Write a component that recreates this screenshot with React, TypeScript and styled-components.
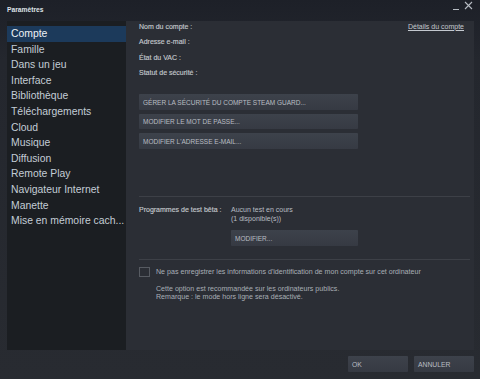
import React, { useState } from 'react';
import styled, { createGlobalStyle } from 'styled-components';

const GlobalStyle = createGlobalStyle`
  html, body {
    margin: 0;
    padding: 0;
    width: 480px;
    height: 379px;
    overflow: hidden;
    background: #272a30;
  }
  * { box-sizing: border-box; }
`;

const Window = styled.div`
  width: 480px;
  height: 379px;
  display: flex;
  flex-direction: column;
  font-family: 'Liberation Sans', Arial, sans-serif;
  background: linear-gradient(180deg, #1d2028 0px, #24272e 60px, #282b31 100%);
`;

const TitleBar = styled.div`
  height: 21px;
  flex: none;
  display: flex;
  align-items: center;
  padding: 0 6px 2px 7px;
`;

const Title = styled.div`
  flex: 1;
  font-size: 6.7px;
  font-weight: bold;
  color: #dfe3e8;
  margin-top: -1px;
`;

const WinButton = styled.button`
  background: none;
  border: none;
  padding: 0;
  width: 12px;
  height: 12px;
  display: flex;
  align-items: center;
  justify-content: center;
  color: #b7bcc3;
  margin-top: -8px;
  cursor: pointer;
`;

const Body = styled.div`
  flex: none;
  height: 329px;
  display: flex;
  padding: 0 6px 0 7px;
`;

const Nav = styled.nav`
  width: 119px;
  flex: none;
  background: #1b1e22;
  padding-top: 5px;
  display: flex;
  flex-direction: column;
`;

const NavItem = styled.div<{ $active?: boolean }>`
  height: 15.6px;
  line-height: 15.6px;
  padding-left: 4px;
  font-size: 10.4px;
  white-space: nowrap;
  color: ${(p) => (p.$active ? '#eef2f6' : '#c3cdd6')};
  background: ${(p) => (p.$active ? '#1c3a5b' : 'transparent')};
`;

const Panel = styled.section`
  flex: 1;
  background: #2b2e35;
  padding: 1.5px 10px 0 13px;
  display: flex;
  flex-direction: column;
  color: #b4b9bf;
  font-size: 7px;
`;

const InfoRow = styled.div`
  display: flex;
  justify-content: space-between;
  height: 8px;
  line-height: 8px;
  margin-bottom: 7.6px;
`;

const Label = styled.span`
  color: #c2c7cc;
  -webkit-text-stroke: 0.15px #c2c7cc;
`;

const DetailsLink = styled.a`
  color: #c4c9cf;
  text-decoration: underline;
  cursor: pointer;
`;

const ButtonStack = styled.div`
  display: flex;
  flex-direction: column;
  gap: 4px;
  margin-top: 9.5px;
`;

const ActionButton = styled.button<{ $width?: number }>`
  width: ${(p) => p.$width ?? 219}px;
  height: 15.5px;
  border: none;
  border-radius: 1px;
  padding: 0 0 0 4px;
  text-align: left;
  font-family: inherit;
  font-size: 6.5px;
  text-transform: uppercase;
  color: #b9bdc3;
  background: linear-gradient(180deg, #3d424b 0%, #363a43 100%);
  cursor: pointer;
`;

const Separator = styled.div<{ $top: number }>`
  height: 1px;
  background: #3d4047;
  margin-top: ${(p) => p.$top}px;
  margin-right: -6px;
`;

const BetaRow = styled.div`
  display: grid;
  grid-template-columns: 92px 1fr;
  margin-top: 8px;
  line-height: 9.3px;
`;

const BetaValue = styled.div`
  display: flex;
  flex-direction: column;
  color: #b8bdc3;
`;

const CheckRow = styled.label`
  display: flex;
  align-items: center;
  gap: 6px;
  margin-top: 6.5px;
  color: #a9aeb5;
  font-size: 7.1px;
  cursor: pointer;
`;

const CheckBox = styled.span<{ $checked: boolean }>`
  width: 11px;
  height: 10px;
  flex: none;
  border: 1px solid #575b62;
  background: ${(p) => (p.$checked ? '#3d4450' : 'transparent')};
`;

const Note = styled.div`
  margin: 8px 0 0 17px;
  line-height: 8.4px;
  font-size: 7.1px;
  color: #a9aeb5;
`;

const Footer = styled.div`
  flex: 1;
  display: flex;
  justify-content: flex-end;
  gap: 6.5px;
  padding: 6px 6.5px 0 0;
`;

const FooterButton = styled(ActionButton)`
  width: 59.5px;
  height: 16.3px;
  font-size: 6.8px;
`;

const navItems = [
  'Compte',
  'Famille',
  'Dans un jeu',
  'Interface',
  'Bibliothèque',
  'Téléchargements',
  'Cloud',
  'Musique',
  'Diffusion',
  'Remote Play',
  'Navigateur Internet',
  'Manette',
  'Mise en mémoire cach...',
];

export default function App() {
  const [checked, setChecked] = useState(false);

  return (
    <>
      <GlobalStyle />
      <Window>
        <TitleBar>
          <Title>Paramètres</Title>
          <WinButton aria-label="Réduire">
            <svg width="8" height="8" viewBox="0 0 8 8">
              <path d="M1 7.5h6" stroke="currentColor" strokeWidth="1" />
            </svg>
          </WinButton>
          <WinButton aria-label="Fermer">
            <svg width="9" height="9" viewBox="0 0 9 9">
              <path d="M1 1l7 7M8 1l-7 7" stroke="currentColor" strokeWidth="1.1" />
            </svg>
          </WinButton>
        </TitleBar>
        <Body>
          <Nav>
            {navItems.map((item, i) => (
              <NavItem key={item} $active={i === 0}>
                {item}
              </NavItem>
            ))}
          </Nav>
          <Panel>
            <InfoRow>
              <Label>Nom du compte :</Label>
              <DetailsLink>Détails du compte</DetailsLink>
            </InfoRow>
            <InfoRow>
              <Label>Adresse e-mail :</Label>
            </InfoRow>
            <InfoRow>
              <Label>État du VAC :</Label>
            </InfoRow>
            <InfoRow>
              <Label>Statut de sécurité :</Label>
            </InfoRow>
            <ButtonStack>
              <ActionButton>Gérer la sécurité du compte Steam Guard...</ActionButton>
              <ActionButton>Modifier le mot de passe...</ActionButton>
              <ActionButton>Modifier l'adresse e-mail...</ActionButton>
            </ButtonStack>
            <Separator $top={47} />
            <BetaRow>
              <Label>Programmes de test bêta :</Label>
              <BetaValue>
                <span>Aucun test en cours</span>
                <span>(1 disponible(s))</span>
              </BetaValue>
            </BetaRow>
            <div style={{ marginTop: 7, marginLeft: 92 }}>
              <ActionButton $width={126.5}>Modifier...</ActionButton>
            </div>
            <Separator $top={13.5} />
            <CheckRow onClick={() => setChecked(!checked)}>
              <CheckBox $checked={checked} />
              Ne pas enregistrer les informations d'identification de mon compte sur cet ordinateur
            </CheckRow>
            <Note>
              Cette option est recommandée sur les ordinateurs publics.
              <br />
              Remarque : le mode hors ligne sera désactivé.
            </Note>
          </Panel>
        </Body>
        <Footer>
          <FooterButton>OK</FooterButton>
          <FooterButton>Annuler</FooterButton>
        </Footer>
      </Window>
    </>
  );
}
